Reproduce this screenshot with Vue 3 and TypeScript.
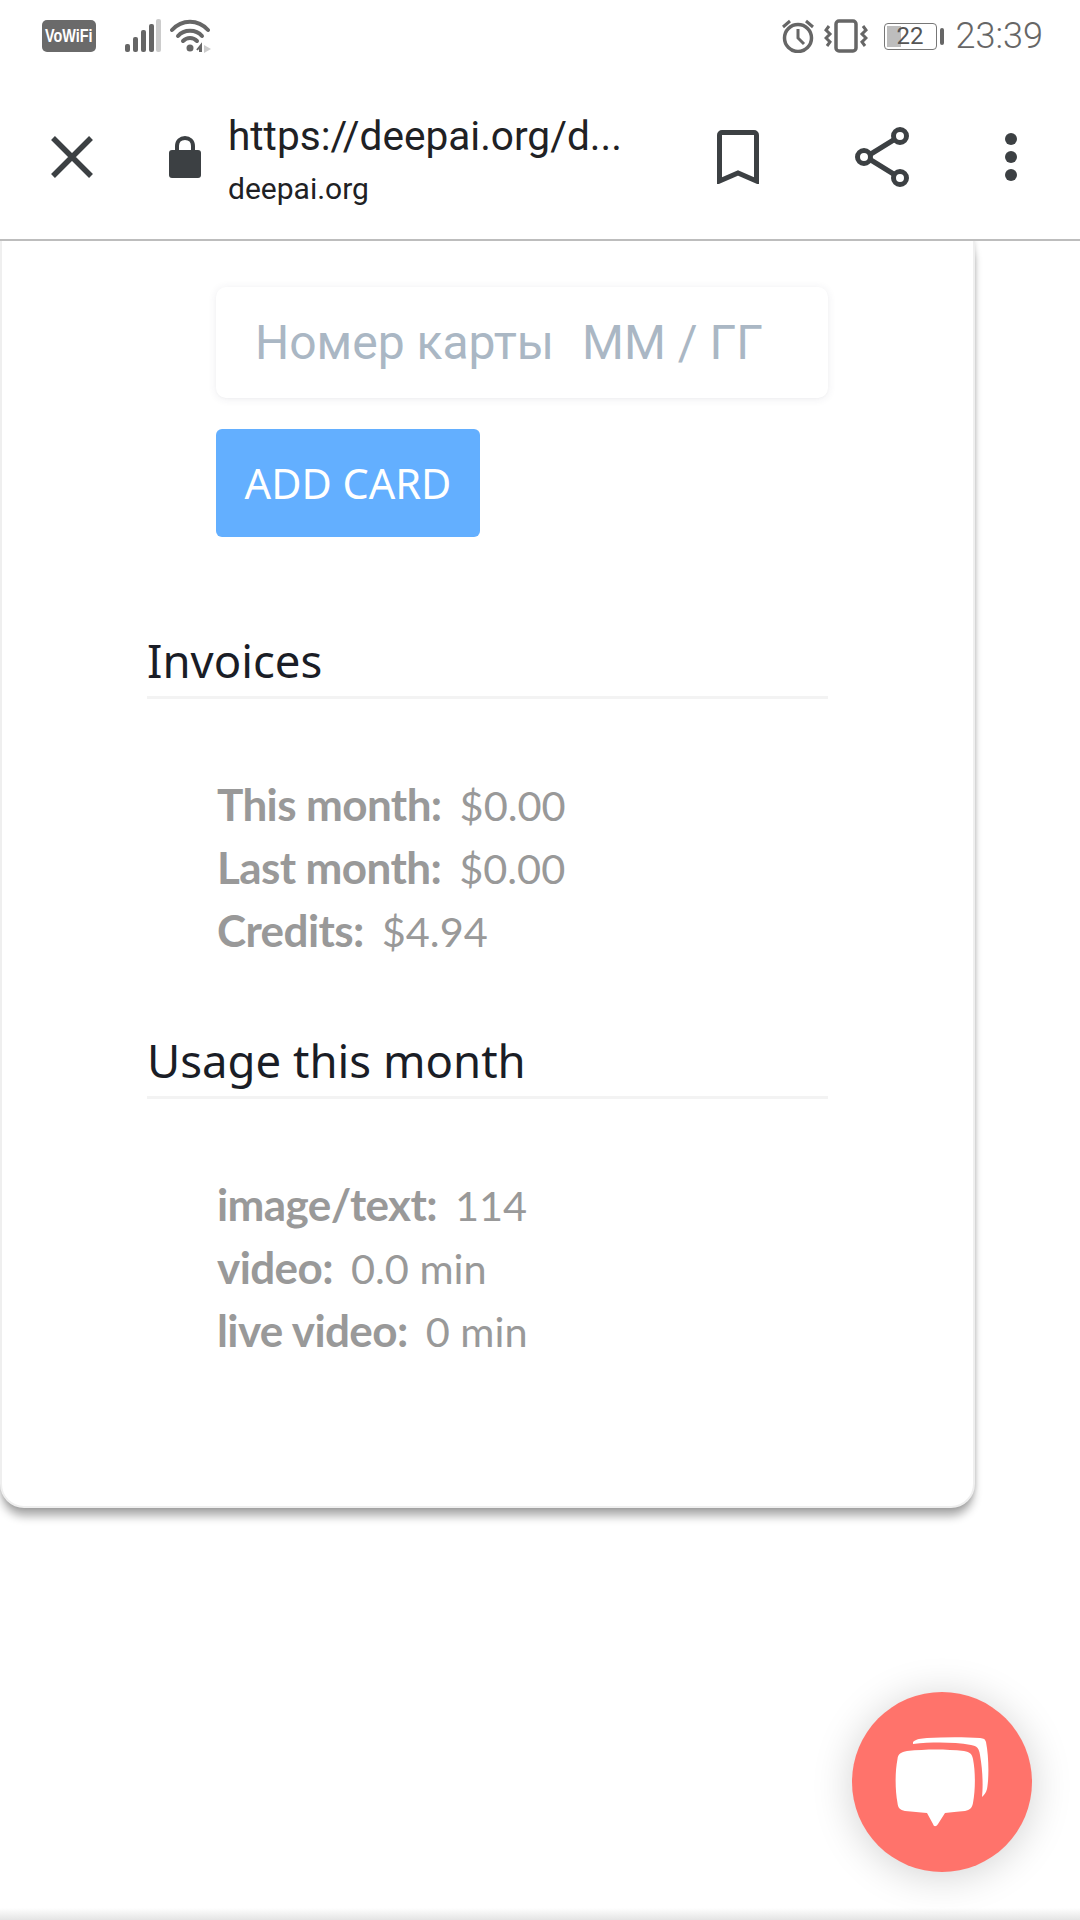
<script setup lang="ts">
interface Row { label: string; value: string }
const invoices: Row[] = [
  { label: 'This month:', value: '$0.00' },
  { label: 'Last month:', value: '$0.00' },
  { label: 'Credits:', value: '$4.94' },
]
const usage: Row[] = [
  { label: 'image/text:', value: '114' },
  { label: 'video:', value: '0.0 min' },
  { label: 'live video:', value: '0 min' },
]
</script>

<template>
  <div class="screen">
    <header class="chrome">
      <div class="status">
        <div class="status-left">
          <span class="vowifi"><span class="vowifi-text">VoWiFi</span></span>
          <svg class="signal" width="36" height="34" viewBox="0 0 36 34">
            <rect x="0" y="25" width="5" height="8" rx="2" fill="#666" />
            <rect x="8" y="18" width="5" height="15" rx="2" fill="#666" />
            <rect x="16" y="11" width="5" height="22" rx="2" fill="#666" />
            <rect x="24" y="5" width="5" height="28" rx="2" fill="#666" />
            <rect x="31" y="0" width="5" height="33" rx="2" fill="#ccc" />
          </svg>
          <svg class="wifi" width="42" height="34" viewBox="0 0 42 34">
            <path d="M2 11C12 0 28 0 38 11" fill="none" stroke="#666" stroke-width="4" stroke-linecap="round" />
            <path d="M8 17C14 10 26 10 32 17" fill="none" stroke="#666" stroke-width="4" stroke-linecap="round" />
            <path d="M13 22C17 18 23 18 27 22" fill="none" stroke="#666" stroke-width="4" stroke-linecap="round" />
            <circle cx="20" cy="29" r="3.5" fill="#666" />
            <path d="M30 33V27M27 31L31 26V33" fill="none" stroke="#666" stroke-width="2" />
            <path d="M34 26L41 30L34 34Z" fill="#ccc" />
          </svg>
        </div>
        <div class="status-right">
          <svg width="34" height="34" viewBox="0 0 34 34">
            <circle cx="17" cy="19" r="13.5" fill="none" stroke="#666" stroke-width="3.5" />
            <path d="M17 10V19L23 25" fill="none" stroke="#666" stroke-width="3" />
            <path d="M2 8L9 2M32 8L25 2" fill="none" stroke="#666" stroke-width="3" />
          </svg>
          <svg class="vib" width="44" height="34" viewBox="0 0 44 34">
            <rect x="12" y="2" width="20" height="30" rx="3" fill="none" stroke="#666" stroke-width="3.5" />
            <path d="M5 7L2 11L6 15L2 19L6 23L3 27M39 7L42 11L38 15L42 19L38 23L41 27" fill="none" stroke="#666" stroke-width="3" />
          </svg>
          <div class="battery">
            <span class="battery-fill"></span>
            <span class="battery-num">22</span>
          </div>
          <span class="battery-cap"></span>
          <span class="time">23:39</span>
        </div>
      </div>
      <div class="toolbar">
        <svg class="close" width="44" height="44" viewBox="0 0 44 44">
          <path d="M3 3L41 41M41 3L3 41" fill="none" stroke="#3c4043" stroke-width="5.5" />
        </svg>
        <svg class="lock" width="34" height="44" viewBox="0 0 34 44">
          <path d="M9 17V11C9 6 12.5 3 17 3C21.5 3 25 6 25 11V17" fill="none" stroke="#3c4043" stroke-width="4" />
          <rect x="1" y="15" width="32" height="28" rx="3" fill="#3c4043" />
        </svg>
        <div class="address">
          <div class="url">https://deepai.org/d...</div>
          <div class="host">deepai.org</div>
        </div>
        <svg class="bookmark" width="42" height="54" viewBox="0 0 42 54">
          <path d="M2.5 51V5A2.5 2.5 0 0 1 5 2.5H37A2.5 2.5 0 0 1 39.5 5V51L21 43Z" fill="none" stroke="#3c4043" stroke-width="5" />
        </svg>
        <svg class="share" width="56" height="62" viewBox="0 0 56 62">
          <path d="M11 31L45 10M11 31L45 52" stroke="#3c4043" stroke-width="5" fill="none" />
          <circle cx="9" cy="31" r="6.5" fill="#fff" stroke="#3c4043" stroke-width="5" />
          <circle cx="45" cy="10" r="6.5" fill="#fff" stroke="#3c4043" stroke-width="5" />
          <circle cx="45" cy="52" r="6.5" fill="#fff" stroke="#3c4043" stroke-width="5" />
        </svg>
        <svg class="more" width="12" height="48" viewBox="0 0 12 48">
          <circle cx="6" cy="6" r="6" fill="#3c4043" />
          <circle cx="6" cy="24" r="6" fill="#3c4043" />
          <circle cx="6" cy="42" r="6" fill="#3c4043" />
        </svg>
      </div>
    </header>

    <main class="card">
      <div class="card-form">
        <div class="card-input">
          <span>Номер карты</span>
          <span>ММ / ГГ</span>
        </div>
        <button class="add" type="button">ADD CARD</button>
      </div>

      <h2 class="heading">Invoices</h2>
      <ul class="rows">
        <li v-for="r in invoices" :key="r.label"><b>{{ r.label }}</b><span>{{ r.value }}</span></li>
      </ul>

      <h2 class="heading second">Usage this month</h2>
      <ul class="rows">
        <li v-for="r in usage" :key="r.label"><b>{{ r.label }}</b><span>{{ r.value }}</span></li>
      </ul>
    </main>

    <button class="fab" type="button" aria-label="Chat">
      <svg width="100" height="96" viewBox="0 0 100 96">
        <path d="M20 5C23 2 28 1.500 34 1C52 0 72 0 87 1C91 1.500 92 2 93 5C96 20 96 42 94 52C93 56 91 58 89 60C90 50 90 35 87 18C86 11 84 9 78 8C60 5 40 5 20 7Z" fill="#fff" />
        <path d="M14 14C34 12 52 12 71 14C77 15 79 17 80 22C82.500 35 82.500 52 80 66C79 71 77 73 72 74C64 75 58 75 52 76L45 87C43 90 41 90 40 87L34 76C26 75 20 75 12 74C7 73 5 71 4.500 66C2 52 2 35 4.500 22C5 17 8 15 14 14Z" fill="#fff" />
      </svg>
    </button>
    <div class="nav-edge"></div>
  </div>
</template>

<style>
html, body { margin: 0; background: #fff; }
</style>

<style scoped>
.screen {
  position: relative;
  width: 1080px;
  height: 1920px;
  overflow: hidden;
  background: #fff;
  font-family: "Noto Sans", sans-serif;
  display: flex;
  flex-direction: column;
}
.chrome {
  position: relative;
  z-index: 2;
  height: 241px;
  box-sizing: border-box;
  background: #fff;
  border-bottom: 2px solid #bdbdbd;
  flex: none;
}
.status {
  height: 70px;
  display: flex;
  justify-content: space-between;
  align-items: flex-start;
  padding: 19px 37px 0 42px;
  box-sizing: border-box;
}
.status-left, .status-right { display: flex; align-items: center; }
.vowifi {
  display: flex;
  align-items: center;
  justify-content: center;
  width: 54px;
  height: 32px;
  border-radius: 5px;
  background: #6a6a6a;
  overflow: hidden;
}
.vowifi-text {
  color: #fff;
  font: 700 18px/32px "Liberation Sans", sans-serif;
  transform: scaleX(0.8);
  white-space: nowrap;
}
.signal { margin-left: 29px; }
.wifi { margin-left: 9px; }
.vib { margin-left: 9px; }
.battery {
  position: relative;
  width: 53px;
  height: 27px;
  margin-left: 16px;
  box-sizing: border-box;
  border: 1.500px solid #777;
  border-radius: 4px;
}
.battery-fill {
  position: absolute;
  left: 2px;
  top: 2px;
  bottom: 2px;
  width: 14px;
  background: #bdbdbd;
}
.battery-num {
  position: absolute;
  inset: 0;
  text-align: center;
  font: 400 24px/24px Roboto, sans-serif;
  color: #555;
}
.battery-cap {
  width: 4px;
  height: 17px;
  margin-left: 3px;
  border-radius: 2px;
  background: #666;
}
.time {
  margin-left: 12px;
  font: 300 36px/34px Roboto, sans-serif;
  color: #666;
}
.toolbar {
  height: 168px;
  display: flex;
  align-items: center;
  padding-top: 5px;
  box-sizing: border-box;
}
.close { margin-left: 50px; }
.lock { margin-left: 74px; }
.address { margin-left: 26px; width: 380px; padding-top: 10px; white-space: nowrap; }
.url {
  font: 400 40.6px/44px Roboto, sans-serif;
  color: #202124;
  margin-top: -2px;
}
.host {
  font: 400 30px/36px Roboto, sans-serif;
  color: #202124;
  margin-top: 13px;
}
.bookmark { margin-left: 109px; }
.share { margin-left: 96px; }
.more { margin-left: 94px; }

.card {
  position: relative;
  z-index: 1;
  width: 975px;
  height: 1267px;
  box-sizing: border-box;
  padding: 46px 145px 0 145px;
  background: #fff;
  border: 2px solid #efefef;
  border-top: 0;
  border-radius: 0 0 24px 24px;
  box-shadow: 0 10px 10px -2px rgba(0, 0, 0, 0.33), 0 0 5px rgba(0, 0, 0, 0.16);
  flex: none;
}
.card-form { padding-left: 69px; }
.card-input {
  height: 111px;
  box-sizing: border-box;
  padding: 0 0 0 39px;
  display: flex;
  align-items: center;
  gap: 28px;
  background: #fff;
  border-radius: 10px;
  box-shadow: 0 1px 8px rgba(50, 50, 93, 0.09), 0 1px 2px rgba(0, 0, 0, 0.02);
  font: 400 48px/54px Roboto, sans-serif;
  color: #aab7c4;
  white-space: nowrap;
}
.add {
  display: block;
  width: 264px;
  height: 108px;
  margin-top: 31px;
  padding: 0;
  border: 0;
  border-radius: 6px;
  background: #63afff;
  color: #fff;
  font: 400 41.5px/108px "Noto Sans", sans-serif;
}
.heading {
  margin: 93px 0 0;
  padding-bottom: 6px;
  border-bottom: 3px solid #f3f3f3;
  font: 400 45.5px/60px "Noto Sans", sans-serif;
  color: #1a1d26;
}
.heading.second { margin-top: 68px; }
.rows {
  list-style: none;
  margin: 0;
  padding: 74px 0 0 70px;
  color: #999;
  font-family: Lato, sans-serif;
  font-size: 41.5px;
  line-height: 63px;
}
.rows li { display: flex; align-items: baseline; height: 63px; }
.rows b { font-size: 44px; font-weight: 700; letter-spacing: -0.6px; margin-right: 18px; }
.fab {
  position: absolute;
  left: 852px;
  top: 1692px;
  z-index: 3;
  width: 180px;
  height: 180px;
  padding: 0;
  border: 0;
  border-radius: 50%;
  background: #ff736b;
  box-shadow: 0 4px 40px rgba(0, 0, 0, 0.18);
  display: flex;
  align-items: center;
  justify-content: center;
}
.fab svg { margin-top: 5px; margin-left: 2px; }
.nav-edge {
  position: absolute;
  left: 0;
  right: 0;
  bottom: 0;
  height: 12px;
  background: linear-gradient(#fff, #e4e4e4);
}
</style>
